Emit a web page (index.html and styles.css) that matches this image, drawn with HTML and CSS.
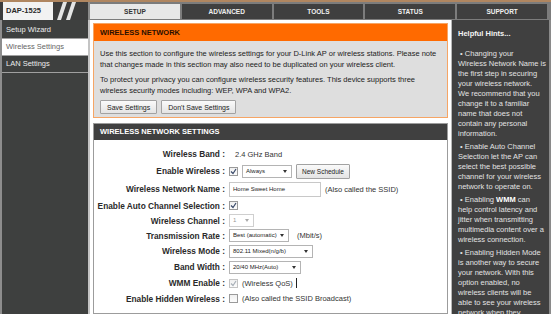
FILE: index.html
```html
<!DOCTYPE html>
<html lang="en">
<head>
    <title>D-Link DAP-1525 - Wireless Settings</title>
    <meta charset="UTF-8">
    <meta name="viewport" content="width=device-width, initial-scale=1.0">
    <link rel="stylesheet" href="styles.css">
</head>
<body>
    <div class="page">
        <div class="topbar">
            <div class="brand">
                <span class="model">DAP-1525</span>
                <svg class="slashes" width="24" height="18" viewBox="0 0 24 18">
                    <polygon points="2,18 6,18 12,0 8,0" fill="#e4e4e4"/>
                    <polygon points="11,18 15,18 21,0 17,0" fill="#e4e4e4"/>
                </svg>
            </div>
            <nav class="tabs">
                <a class="tab active" href="#">SETUP</a>
                <a class="tab" href="#">ADVANCED</a>
                <a class="tab" href="#">TOOLS</a>
                <a class="tab" href="#">STATUS</a>
                <a class="tab" href="#">SUPPORT</a>
            </nav>
        </div>

        <div class="layout">
            <aside class="sidebar">
                <a class="menu-item" href="#">Setup Wizard</a>
                <a class="menu-item active" href="#">Wireless Settings</a>
                <a class="menu-item" href="#">LAN Settings</a>
            </aside>

            <main class="content">
                <section class="intro-box">
                    <h2 class="intro-title">WIRELESS NETWORK</h2>
                    <div class="intro-body">
                        <p>Use this section to configure the wireless settings for your D-Link AP or wireless stations. Please note that changes made in this section may also need to be duplicated on your wireless client.</p>
                        <p>To protect your privacy you can configure wireless security features. This device supports three wireless security modes including: WEP, WPA and WPA2.</p>
                        <div class="intro-actions">
                            <button class="btn">Save Settings</button>
                            <button class="btn">Don't Save Settings</button>
                        </div>
                    </div>
                </section>

                <section class="settings-box">
                    <h2 class="settings-title">WIRELESS NETWORK SETTINGS</h2>
                    <div class="settings-rows">
                        <div class="row">
                            <span class="label">Wireless Band :</span>
                            <span class="value text-value">2.4 GHz Band</span>
                        </div>
                        <div class="row tall">
                            <span class="label">Enable Wireless :</span>
                            <span class="value">
                                <span class="check"><svg width="7" height="7" viewBox="0 0 7 7"><path d="M1 3.5 L3 5.5 L6 1" fill="none" stroke="#3a4a6a" stroke-width="1.2"/></svg></span>
                                <span class="select w-always">Always<i class="arrow"></i></span>
                                <button class="btn small">New Schedule</button>
                            </span>
                        </div>
                        <div class="row tall">
                            <span class="label">Wireless Network Name :</span>
                            <span class="value">
                                <span class="text-input">Home Sweet Home</span>
                                <span>(Also called the SSID)</span>
                            </span>
                        </div>
                        <div class="row short">
                            <span class="label">Enable Auto Channel Selection :</span>
                            <span class="value">
                                <span class="check"><svg width="7" height="7" viewBox="0 0 7 7"><path d="M1 3.5 L3 5.5 L6 1" fill="none" stroke="#3a4a6a" stroke-width="1.2"/></svg></span>
                            </span>
                        </div>
                        <div class="row short">
                            <span class="label">Wireless Channel :</span>
                            <span class="value">
                                <span class="select disabled w-channel">1<i class="arrow"></i></span>
                            </span>
                        </div>
                        <div class="row short">
                            <span class="label">Transmission Rate :</span>
                            <span class="value">
                                <span class="select w-rate">Best (automatic)<i class="arrow"></i></span>
                                <span class="unit">(Mbit/s)</span>
                            </span>
                        </div>
                        <div class="row">
                            <span class="label">Wireless Mode :</span>
                            <span class="value">
                                <span class="select w-mode">802.11 Mixed(n/g/b)<i class="arrow"></i></span>
                            </span>
                        </div>
                        <div class="row">
                            <span class="label">Band Width :</span>
                            <span class="value">
                                <span class="select w-band">20/40 MHz(Auto)<i class="arrow"></i></span>
                            </span>
                        </div>
                        <div class="row">
                            <span class="label">WMM Enable :</span>
                            <span class="value">
                                <span class="check disabled"><svg width="7" height="7" viewBox="0 0 7 7"><path d="M1 3.5 L3 5.5 L6 1" fill="none" stroke="#a8b0b8" stroke-width="1.2"/></svg></span>
                                <span>(Wireless QoS)</span><span class="caret"></span>
                            </span>
                        </div>
                        <div class="row short">
                            <span class="label">Enable Hidden Wireless :</span>
                            <span class="value">
                                <span class="check"></span>
                                <span>(Also called the SSID Broadcast)</span>
                            </span>
                        </div>
                    </div>
                </section>
            </main>

            <aside class="hints">
                <h3 class="hints-title">Helpful Hints...</h3>
                <p>&nbsp;• Changing your<br>Wireless Network Name is<br>the first step in securing<br>your wireless network.<br>We recommend that you<br>change it to a familiar<br>name that does not<br>contain any personal<br>information.</p>
                <p>&nbsp;• Enable Auto Channel<br>Selection let the AP can<br>select the best possible<br>channel for your wireless<br>network to operate on.</p>
                <p>&nbsp;• Enabling <b>WMM</b> can<br>help control latency and<br>jitter when transmitting<br>multimedia content over a<br>wireless connection.</p>
                <p>&nbsp;• Enabling Hidden Mode<br>is another way to secure<br>your network. With this<br>option enabled, no<br>wireless clients will be<br>able to see your wireless<br>network when they</p>
            </aside>
        </div>
    </div>
</body>
</html>
```

FILE: styles.css
```css
* {
    margin: 0;
    padding: 0;
    box-sizing: border-box;
    font-family: "Liberation Sans", Arial, sans-serif;
}

body {
    background: #404040;
}

.page {
    width: 551px;
    height: 314px;
    overflow: hidden;
    border-top: 2px solid #b08660;
    display: flex;
    flex-direction: column;
}

/* Top bar */
.topbar {
    height: 22px;
    display: flex;
    background: #3c3c3c;
}

.brand {
    width: 90px;
    display: flex;
    align-items: center;
    padding-left: 3px;
    border-right: 2px solid #8a8a8a;
}

.model {
    width: 50px;
    height: 18px;
    line-height: 18px;
    padding-left: 3px;
    background: #f2f2f2;
    color: #2a2a2a;
    font-size: 7.5px;
    font-weight: bold;
}

.slashes {
    margin-left: 2px;
}

.tabs {
    flex: 1;
    display: flex;
    gap: 2px;
    padding: 2px 4px 1px 0;
    background: #7c7c7c;
}

.tab {
    flex: 1;
    display: flex;
    align-items: center;
    justify-content: center;
    background: #3f3f3f;
    color: #f0f0f0;
    font-size: 6.5px;
    font-weight: bold;
    text-decoration: none;
}

.tab.active {
    background: #e8e8e8;
    color: #333;
}

/* Columns */
.layout {
    flex: 1;
    display: flex;
}

.sidebar {
    width: 90px;
    padding-top: 2px;
    background: #3e403f;
    border-left: 2px solid #8d8d8d;
    border-right: 2px solid #c4c4c4;
    display: flex;
    flex-direction: column;
}

.menu-item {
    height: 17px;
    line-height: 16px;
    padding-left: 4px;
    border-bottom: 1px solid #a0a0a0;
    color: #ececec;
    font-size: 7.5px;
    text-decoration: none;
}

.menu-item.active {
    background: #fff;
    color: #666;
}

.content {
    width: 361px;
    background: #fff;
    padding: 3px 3px 0 3px;
    color: #222;
    font-size: 7.5px;
}

.hints {
    flex: 1;
    background: #404040;
    border-left: 1px solid #b8b8b8;
    border-right: 2px solid #8a8a8a;
    padding: 9px 2px 0 6px;
    color: #e2e2e2;
    font-size: 7.5px;
    line-height: 10px;
    white-space: nowrap;
}

.hints-title {
    font-size: 7.5px;
    font-weight: bold;
    color: #f4f4f4;
    margin-bottom: 10px;
}

.hints p {
    margin-bottom: 3px;
}

.hints b {
    color: #fff;
}

/* Wireless network box */
.intro-box {
    border: 1px solid #f6a565;
}

.intro-title {
    height: 17px;
    line-height: 17px;
    padding-left: 6px;
    background: #ff6a00;
    color: #2a1000;
    font-size: 7.5px;
    font-weight: bold;
}

.intro-body {
    background: #dedede;
    padding: 7px 6px 3px;
    line-height: 11px;
}

.intro-body p {
    margin-bottom: 4px;
}

.intro-actions {
    display: flex;
    gap: 4px;
}

.btn {
    height: 14px;
    padding: 0 6px;
    background: linear-gradient(#fafafa, #e4e4e4);
    border: 1px solid #a2a2a2;
    border-radius: 1px;
    color: #222;
    font-size: 7px;
}

.btn.small {
    height: 15px;
    padding: 0 5px;
    font-size: 6.5px;
}

/* Wireless network settings box */
.settings-box {
    margin-top: 5px;
    border: 1px solid #9c9c9c;
}

.settings-title {
    height: 16px;
    line-height: 16px;
    padding-left: 6px;
    background: #404040;
    color: #fff;
    font-size: 7.5px;
    font-weight: bold;
}

.settings-rows {
    padding: 6px 0 7px;
}

.row {
    height: 16px;
    display: grid;
    grid-template-columns: 131px 1fr;
    column-gap: 4px;
    align-items: center;
}

.row.tall {
    height: 18px;
}

.row.short {
    height: 15px;
}

.label {
    text-align: right;
    font-size: 8.3px;
    font-weight: bold;
    color: #2a2a2a;
    white-space: nowrap;
}

.value {
    display: flex;
    align-items: center;
    gap: 4px;
    color: #333;
}

.text-value {
    padding-left: 6px;
}

.check {
    width: 9px;
    height: 9px;
    display: flex;
    align-items: center;
    justify-content: center;
    border: 1px solid #9a9a9a;
    background: linear-gradient(#f0f0f0, #fcfcfc);
}

.check.disabled {
    border-color: #c4c4c4;
}

.select {
    position: relative;
    height: 13px;
    line-height: 11px;
    padding-left: 3px;
    border: 1px solid #b4b4b4;
    background: #fff;
    font-size: 6px;
    color: #222;
}

.select.disabled {
    color: #999;
    border-color: #cfcfcf;
}

.arrow {
    position: absolute;
    right: 4px;
    top: 4px;
    border-left: 2.5px solid transparent;
    border-right: 2.5px solid transparent;
    border-top: 3px solid #333;
}

.select.disabled .arrow {
    border-top-color: #aaa;
}

.w-always { width: 50px; }
.w-channel { width: 25px; }
.w-rate { width: 60px; }
.w-mode { width: 84px; }
.w-band { width: 72px; }

.unit {
    margin-left: 4px;
}

.text-input {
    width: 92px;
    height: 15px;
    line-height: 13px;
    padding-left: 3px;
    border: 1px solid #c8c8c8;
    background: #fff;
    font-size: 6px;
    color: #222;
}

.caret {
    width: 1px;
    height: 10px;
    background: #222;
    margin-left: -1px;
}
```
